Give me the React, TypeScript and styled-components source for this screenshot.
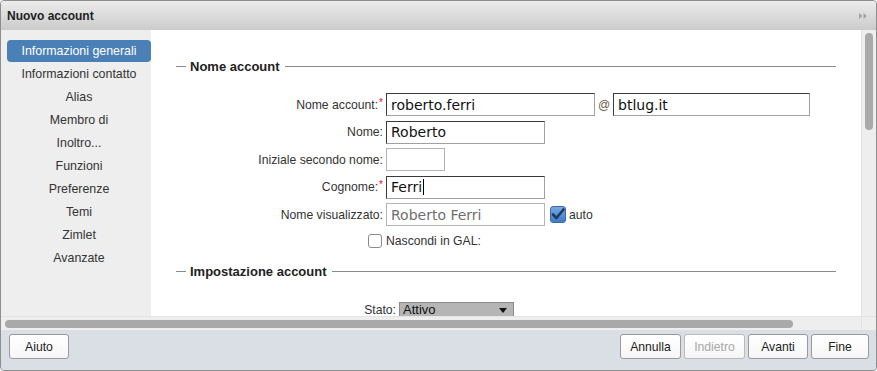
import React from "react";
import styled, { createGlobalStyle } from "styled-components";

const Global = createGlobalStyle`
  html, body { margin: 0; padding: 0; background: #ffffff; }
  body { font-family: "Liberation Sans", Arial, sans-serif; }
  * { box-sizing: border-box; }
`;

const Window = styled.div`
  width: 877px;
  height: 371px;
  border: 1px solid #8e8e8e;
  border-radius: 4px;
  overflow: hidden;
  display: flex;
  flex-direction: column;
  background: #dadee5;
`;

const TitleBar = styled.div`
  height: 29px;
  flex: none;
  display: flex;
  align-items: center;
  justify-content: space-between;
  padding: 0 8px 0 6px;
  background: linear-gradient(#ececec, #cbcbcb);
`;

const Title = styled.div`
  font-size: 12px;
  font-weight: bold;
  color: #1e1e1e;
`;

const Body = styled.div`
  display: grid;
  grid-template-columns: 1fr 15px;
  grid-template-rows: 286px 14px;
  flex: none;
`;

const Main = styled.div`
  display: flex;
  overflow: hidden;
`;

const Nav = styled.div`
  width: 150px;
  flex: none;
  background: #eeeeee;
  padding-top: 10px;
`;

const NavItem = styled.div<{ $active?: boolean }>`
  height: 22px;
  margin: 0 0 1px 6px;
  display: flex;
  align-items: center;
  justify-content: center;
  font-size: 12.4px;
  color: ${(p) => (p.$active ? "#ffffff" : "#333333")};
  background: ${(p) => (p.$active ? "#4b80b6" : "transparent")};
  border-radius: 4px;
`;

const Content = styled.div`
  flex: 1;
  background: #ffffff;
  padding: 28px 25px 0 25px;
  overflow: hidden;
`;

const Legend = styled.div<{ $mt?: number }>`
  display: flex;
  align-items: center;
  height: 16px;
  margin-top: ${(p) => p.$mt ?? 0}px;
  font-size: 13px;
  font-weight: bold;
  color: #222;
  &::before {
    content: "";
    width: 10px;
    height: 1px;
    background: #8a8a8a;
    margin-right: 4px;
  }
  &::after {
    content: "";
    flex: 1;
    height: 1px;
    background: #8a8a8a;
    margin-left: 5px;
  }
`;

const Form = styled.div<{ $mt: number }>`
  margin-top: ${(p) => p.$mt}px;
  display: flex;
  flex-direction: column;
  gap: 4.5px;
`;

const Row = styled.div<{ $h?: number; $top?: boolean }>`
  display: flex;
  align-items: ${(p) => (p.$top ? "flex-start" : "center")};
  gap: 3px;
  height: ${(p) => p.$h ?? 23}px;
`;

const Label = styled.div<{ $w?: number; $pt?: number }>`
  width: ${(p) => p.$w ?? 207}px;
  flex: none;
  text-align: right;
  font-size: 12.2px;
  color: #333;
  display: flex;
  justify-content: flex-end;
  align-items: center;
  padding-top: ${(p) => p.$pt ?? 0}px;
`;

const Req = styled.span`
  color: #d11;
  font-size: 10px;
  align-self: flex-start;
  margin-left: 1px;
  line-height: 10px;
`;

const TextBox = styled.div<{ $w: number; $dark?: boolean; $disabled?: boolean }>`
  width: ${(p) => p.$w}px;
  height: 23px;
  flex: none;
  border: 1px solid ${(p) => (p.$dark ? "#a0a0a0" : "#b4b4b4")};
  border-top-color: ${(p) => (p.$dark ? "#3a3a3a" : "#b4b4b4")};
  border-left-color: ${(p) => (p.$dark ? "#3a3a3a" : "#b4b4b4")};
  padding: 0 4px;
  font-family: "DejaVu Sans", Verdana, sans-serif;
  font-size: 14px;
  line-height: 20px;
  color: ${(p) => (p.$disabled ? "#6e6e6e" : "#111")};
  background: #fff;
  white-space: nowrap;
  display: flex;
  align-items: center;
`;

const Caret = styled.span`
  display: inline-block;
  width: 1px;
  height: 16px;
  background: #000;
  margin-left: 1px;
`;

const At = styled.span`
  width: 11px;
  flex: none;
  font-size: 12px;
  color: #6a5a4a;
  margin-right: 1px;
`;

const CheckBox = styled.span<{ $checked?: boolean }>`
  width: ${(p) => (p.$checked ? 16 : 14)}px;
  height: ${(p) => (p.$checked ? 17 : 14)}px;
  flex: none;
  border-radius: 3px;
  border: 1px solid ${(p) => (p.$checked ? "#3d6aa5" : "#8a8a8a")};
  background: ${(p) => (p.$checked ? "linear-gradient(#78a8e4, #3f7bc8)" : "#fff")};
  display: inline-flex;
  align-items: center;
  justify-content: center;
  margin-left: ${(p) => (p.$checked ? 2 : 0)}px;
`;

const CheckText = styled.span`
  font-size: 12.2px;
  color: #333;
`;

const CheckLabelCell = styled.div`
  width: 207px;
  flex: none;
  display: flex;
  justify-content: flex-end;
  padding-right: 1px;
`;

const Select = styled.div`
  width: 115px;
  height: 20px;
  border: 1px solid #8a8a8a;
  background: #b5b5b5;
  font-size: 13px;
  line-height: 14px;
  color: #111;
  display: flex;
  align-items: flex-start;
  justify-content: space-between;
  padding: 0 6px 0 3px;
  svg { margin-top: 5px; }
`;

const VScroll = styled.div`
  background: #eeeeee;
  border-left: 1px solid #e2e2e2;
  padding: 3px 0 0 3px;
`;

const VThumb = styled.div`
  width: 8px;
  height: 97px;
  border-radius: 4px;
  background: #a9a9a9;
`;

const HScroll = styled.div`
  background: #eeeeee;
  border-top: 1px solid #e4e4e4;
  padding: 3px 0 0 4px;
`;

const HThumb = styled.div`
  width: 788px;
  height: 8px;
  border-radius: 4px;
  background: #a9a9a9;
`;

const Corner = styled.div`
  background: #eeeeee;
  border-top: 1px solid #e4e4e4;
  border-left: 1px solid #e2e2e2;
`;

const Footer = styled.div`
  flex: 1;
  display: flex;
  align-items: flex-start;
  justify-content: space-between;
  padding: 4px 7px 0 8px;
  background: #dadee5;
`;

const ButtonGroup = styled.div`
  display: flex;
  gap: 3px;
`;

const Button = styled.div<{ $w: number; $disabled?: boolean }>`
  width: ${(p) => p.$w}px;
  height: 25px;
  border: 1px solid ${(p) => (p.$disabled ? "#bbbbbb" : "#9a9a9a")};
  border-radius: 3px;
  background: linear-gradient(#ffffff, #f6f6f6);
  font-size: 12.2px;
  color: ${(p) => (p.$disabled ? "#a8a8a8" : "#222")};
  display: flex;
  align-items: center;
  justify-content: center;
`;

const navItems = [
  "Informazioni generali",
  "Informazioni contatto",
  "Alias",
  "Membro di",
  "Inoltro...",
  "Funzioni",
  "Preferenze",
  "Temi",
  "Zimlet",
  "Avanzate",
];

export default function App() {
  return (
    <>
      <Global />
      <Window>
        <TitleBar>
          <Title>Nuovo account</Title>
          <svg width="10" height="8" viewBox="0 0 10 8">
            <path d="M1 1 L4.5 4 L1 7 Z M5.5 1 L9 4 L5.5 7 Z" fill="#a3a3a3" />
          </svg>
        </TitleBar>
        <Body>
          <Main>
            <Nav>
              {navItems.map((n, i) => (
                <NavItem key={n} $active={i === 0}>
                  {n}
                </NavItem>
              ))}
            </Nav>
            <Content>
              <Legend>Nome account</Legend>
              <Form $mt={19}>
                <Row>
                  <Label>
                    Nome account:<Req>*</Req>
                  </Label>
                  <TextBox $w={209} $dark>roberto.ferri</TextBox>
                  <At>@</At>
                  <TextBox $w={197} $dark>btlug.it</TextBox>
                </Row>
                <Row>
                  <Label>Nome:</Label>
                  <TextBox $w={159} $dark>Roberto</TextBox>
                </Row>
                <Row>
                  <Label>Iniziale secondo nome:</Label>
                  <TextBox $w={59} />
                </Row>
                <Row>
                  <Label>
                    Cognome:<Req>*</Req>
                  </Label>
                  <TextBox $w={159} $dark>
                    Ferri
                    <Caret />
                  </TextBox>
                </Row>
                <Row>
                  <Label>Nome visualizzato:</Label>
                  <TextBox $w={159} $disabled>Roberto Ferri</TextBox>
                  <CheckBox $checked>
                    <svg width="14" height="13" viewBox="0 0 14 13">
                      <path
                        d="M2 6.5 L5.5 10 L12.5 1.5"
                        fill="none"
                        stroke="#1f3a5f"
                        strokeWidth="2.6"
                        strokeLinecap="round"
                        strokeLinejoin="round"
                      />
                    </svg>
                  </CheckBox>
                  <CheckText>auto</CheckText>
                </Row>
                <Row $h={20}>
                  <CheckLabelCell>
                    <CheckBox />
                  </CheckLabelCell>
                  <CheckText>Nascondi in GAL:</CheckText>
                </Row>
              </Form>
              <Legend $mt={13}>Impostazione account</Legend>
              <Form $mt={22}>
                <Row $top>
                  <Label $w={220} $pt={1}>
                    Stato:
                  </Label>
                  <Select>
                    <span>Attivo</span>
                    <svg width="8" height="5" viewBox="0 0 8 5">
                      <path d="M0 0 L8 0 L4 5 Z" fill="#111" />
                    </svg>
                  </Select>
                </Row>
              </Form>
            </Content>
          </Main>
          <VScroll>
            <VThumb />
          </VScroll>
          <HScroll>
            <HThumb />
          </HScroll>
          <Corner />
        </Body>
        <Footer>
          <Button $w={60}>Aiuto</Button>
          <ButtonGroup>
            <Button $w={61}>Annulla</Button>
            <Button $w={61} $disabled>
              Indietro
            </Button>
            <Button $w={60}>Avanti</Button>
            <Button $w={58}>Fine</Button>
          </ButtonGroup>
        </Footer>
      </Window>
    </>
  );
}
